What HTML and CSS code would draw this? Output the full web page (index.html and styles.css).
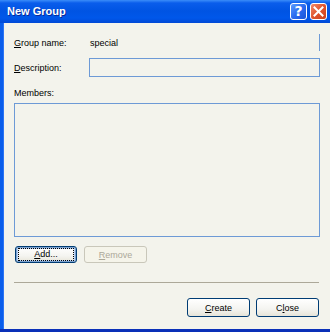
FILE: index.html
```html
<!DOCTYPE html>
<html>
<head>
<meta charset="utf-8">
<link rel="stylesheet" href="styles.css">
</head>
<body>
<div class="window">
  <div class="titlebar">
    <span class="title">New Group</span>
    <div class="tb-buttons">
      <span class="tb-btn help">?</span>
      <span class="tb-btn close">
        <svg width="11" height="11" viewBox="0 0 11 11"><path d="M1.5 1.5 L9.5 9.5 M9.5 1.5 L1.5 9.5" stroke="#fff" stroke-width="2" stroke-linecap="square"/></svg>
      </span>
    </div>
  </div>
  <div class="content">
    <div class="row row-name">
      <span class="label"><u>G</u>roup name:</span>
      <span class="value">special</span>
    </div>
    <div class="row row-desc">
      <span class="label"><u>D</u>escription:</span>
      <span class="input"></span>
    </div>
    <div class="members-label">Members:</div>
    <div class="listbox"></div>
    <div class="btn-row">
      <button class="btn btn-add"><span class="focus"><u>A</u>dd...</span></button>
      <button class="btn btn-remove" disabled><u>R</u>emove</button>
    </div>
    <div class="separator"></div>
    <div class="footer">
      <button class="btn btn-wide"><u>C</u>reate</button>
      <button class="btn btn-wide">C<u>l</u>ose</button>
    </div>
  </div>
</div>
</body>
</html>
```
FILE: styles.css
```css
html, body {
  margin: 0;
  padding: 0;
  background: #f3f3ec;
}
.window {
  width: 330px;
  height: 332px;
  display: flex;
  flex-direction: column;
  box-sizing: border-box;
  border-bottom: 3px solid #0a30b8;
  font-family: "Liberation Sans", Arial, sans-serif;
  font-size: 9px;
  color: #000;
  overflow: hidden;
}
.titlebar {
  height: 23px;
  flex: none;
  display: flex;
  align-items: center;
  justify-content: space-between;
  background: linear-gradient(to bottom, #3b8df9 0px, #0a5deb 3px, #0054e3 11px, #0057ea 18px, #0049d6 23px);
  padding-left: 7px;
  padding-right: 3px;
}
.title {
  font-size: 11px;
  font-weight: bold;
  color: #fff;
  text-shadow: 1px 1px 0 #0a2a9a;
  margin-top: -1px;
}
.tb-buttons {
  display: flex;
  gap: 3px;
  margin-top: -1px;
}
.tb-btn {
  width: 17px;
  height: 17px;
  box-sizing: border-box;
  border: 1px solid #fff;
  border-radius: 3px;
  display: flex;
  align-items: center;
  justify-content: center;
}
.help {
  background: linear-gradient(135deg, #5a9cff, #2a6cf0 50%, #1a55d8);
  color: #fff;
  font-weight: bold;
  font-size: 14px;
  font-family: "DejaVu Sans", sans-serif;
}
.close {
  background: linear-gradient(135deg, #f08a6a, #e0542e 50%, #c8401e);
}
.content {
  flex: 1;
  display: flex;
  flex-direction: column;
  border-left: 3px solid #0a5deb;
  box-shadow: inset 1px 0 0 #2c74f4;
  padding: 11px 10px 0 11px;
}
.row {
  display: flex;
  align-items: center;
}
.label {
  flex: none;
}
.row-name {
  height: 17px;
  border-right: 1px solid #6d9ad6;
}
.row-name .label {
  width: 76px;
}
.row-desc {
  height: 19px;
  margin-top: 7px;
}
.row-desc .label {
  width: 75px;
}
.input {
  flex: 1;
  align-self: stretch;
  border: 1px solid #6d9ad6;
}
.members-label {
  margin-top: 10px;
  height: 12px;
  line-height: 12px;
}
.listbox {
  margin-top: 4px;
  height: 134px;
  box-sizing: border-box;
  border: 1px solid #6d9ad6;
}
.btn-row {
  display: flex;
  gap: 7px;
  margin-top: 9px;
  padding-left: 1px;
}
.btn {
  font-family: "Liberation Sans", Arial, sans-serif;
  font-size: 9px;
  color: #000;
  box-sizing: border-box;
  border: 1px solid #003c74;
  border-radius: 3px;
  background: linear-gradient(to bottom, #ffffff, #f4f4f0 60%, #e6e4d8);
  padding: 0;
  margin: 0;
  display: flex;
  align-items: center;
  justify-content: center;
}
.btn-add {
  width: 62px;
  height: 17px;
  box-shadow: inset 0 0 0 1px #7da2ce, inset 0 0 0 2px #bcd4f6;
}
.focus {
  border: 1px dotted #000;
  width: 54px;
  height: 11px;
  line-height: 11px;
  text-align: center;
}
.btn-remove {
  width: 63px;
  height: 17px;
  border-color: #c9c7ba;
  background: #f5f4ea;
  color: #aca899;
}
.separator {
  margin-top: 19px;
  height: 1px;
  margin-right: 1px;
  background: #aca899;
}
.footer {
  display: flex;
  justify-content: flex-end;
  gap: 6px;
  margin-top: 15px;
  padding-right: 1px;
}
.btn-wide {
  width: 63px;
  height: 19px;
}
```
